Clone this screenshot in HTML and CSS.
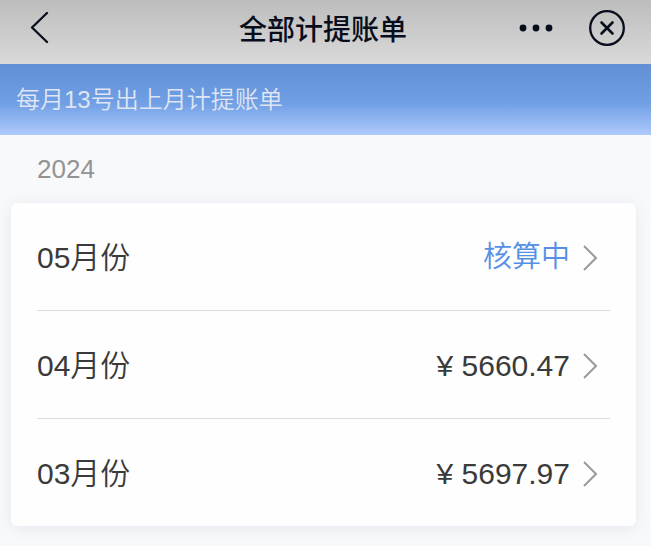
FILE: index.html
```html
<!DOCTYPE html>
<html lang="zh-CN">

<head>
    <meta charset="UTF-8">
    <meta name="viewport" content="width=device-width, initial-scale=1.0">
    <title>全部计提账单</title>
    <link rel="stylesheet" href="styles.css">
</head>

<body>
    <header class="navbar">
        <button type="button" class="nav-button back" aria-label="返回">
            <svg width="20" height="32" viewBox="0 0 20 32">
                <path d="M18 1 L3 15.5 L18 30" />
            </svg>
        </button>
        <h1 class="title">全部计提账单</h1>
        <div class="nav-actions">
            <button type="button" class="nav-button" aria-label="更多">
                <svg class="dots" width="34" height="8" viewBox="0 0 34 8">
                    <circle cx="4" cy="4" r="3.4" />
                    <circle cx="17" cy="4" r="3.4" />
                    <circle cx="30" cy="4" r="3.4" />
                </svg>
            </button>
            <button type="button" class="nav-button" aria-label="关闭">
                <svg width="38" height="38" viewBox="0 0 38 38">
                    <circle cx="19" cy="19" r="16.8" />
                    <path class="cross" d="M13.5 13.5 L24.5 24.5 M24.5 13.5 L13.5 24.5" />
                </svg>
            </button>
        </div>
    </header>

    <p class="notice">每月13号出上月计提账单</p>

    <main>
        <h2 class="year">2024</h2>
        <ul class="bill-list">
            <li class="bill-item">
                <a href="#" class="bill-link">
                    <span class="month">05月份</span>
                    <span class="status">核算中</span>
                    <svg class="arrow" width="16" height="26" viewBox="0 0 16 26">
                        <path d="M2 1 L14 13 L2 25" />
                    </svg>
                </a>
            </li>
            <li class="bill-item">
                <a href="#" class="bill-link">
                    <span class="month">04月份</span>
                    <span class="amount">¥ 5660.47</span>
                    <svg class="arrow" width="16" height="26" viewBox="0 0 16 26">
                        <path d="M2 1 L14 13 L2 25" />
                    </svg>
                </a>
            </li>
            <li class="bill-item">
                <a href="#" class="bill-link">
                    <span class="month">03月份</span>
                    <span class="amount">¥ 5697.97</span>
                    <svg class="arrow" width="16" height="26" viewBox="0 0 16 26">
                        <path d="M2 1 L14 13 L2 25" />
                    </svg>
                </a>
            </li>
        </ul>
    </main>
</body>

</html>
```
FILE: styles.css
```css
* {
    box-sizing: border-box;
}

body {
    margin: 0;
    font-family: "Liberation Sans", "Noto Sans CJK SC", sans-serif;
    font-weight: 350;
    background-color: #f8f9fa;
    color: #3a3a3a;
}

/* Top bar */
.navbar {
    display: grid;
    grid-template-columns: 1fr auto 1fr;
    align-items: center;
    padding: 0 25px 8px 20px;
    background: linear-gradient(#bdbdbd, #d9d9d9);
}

.title {
    margin: 0;
    font-size: 28px;
    line-height: 56px;
    font-weight: 500;
    font-family: "Noto Sans CJK SC", sans-serif;
    color: #070d1b;
}

.nav-button {
    display: flex;
    padding: 0;
    border: none;
    background: none;
    cursor: pointer;
}

.back {
    justify-self: start;
    padding-left: 9px;
}

.nav-button svg {
    fill: none;
    stroke: #070d1b;
    stroke-width: 2.3;
    stroke-linecap: round;
    stroke-linejoin: round;
}

.nav-button .dots {
    fill: #070d1b;
    stroke: none;
}

.nav-button .cross {
    stroke-width: 2.6;
}

.nav-actions {
    display: flex;
    align-items: center;
    justify-content: flex-end;
    gap: 35px;
}

/* Blue notice */
.notice {
    margin: 0;
    padding: 16px;
    font-size: 24px;
    line-height: 39px;
    color: #dfe6f2;
    background: linear-gradient(#628fd6, #709fe5 55%, #aecafc);
}

/* Bills */
.year {
    margin: 0;
    padding: 16px 37px;
    font-size: 26px;
    line-height: 36px;
    font-weight: 350;
    color: #939393;
}

.bill-list {
    margin: 0 15px 20px 11px;
    padding: 0 26px;
    list-style: none;
    background-color: #fefefe;
    border-radius: 6px;
    box-shadow: 0 2px 16px rgba(120, 150, 180, 0.16);
}

.bill-item + .bill-item {
    border-top: 1px solid #dcdcdc;
}

.bill-link {
    display: flex;
    align-items: center;
    padding: 33px 12px 31px 0;
    line-height: 43px;
    color: inherit;
    text-decoration: none;
}

.month {
    flex: 1;
    font-size: 30px;
}

.status {
    font-size: 29px;
    color: #5590e4;
}

.amount {
    font-size: 30px;
}

.arrow {
    margin-left: 12px;
    fill: none;
    stroke: #999;
    stroke-width: 2;
}
```
